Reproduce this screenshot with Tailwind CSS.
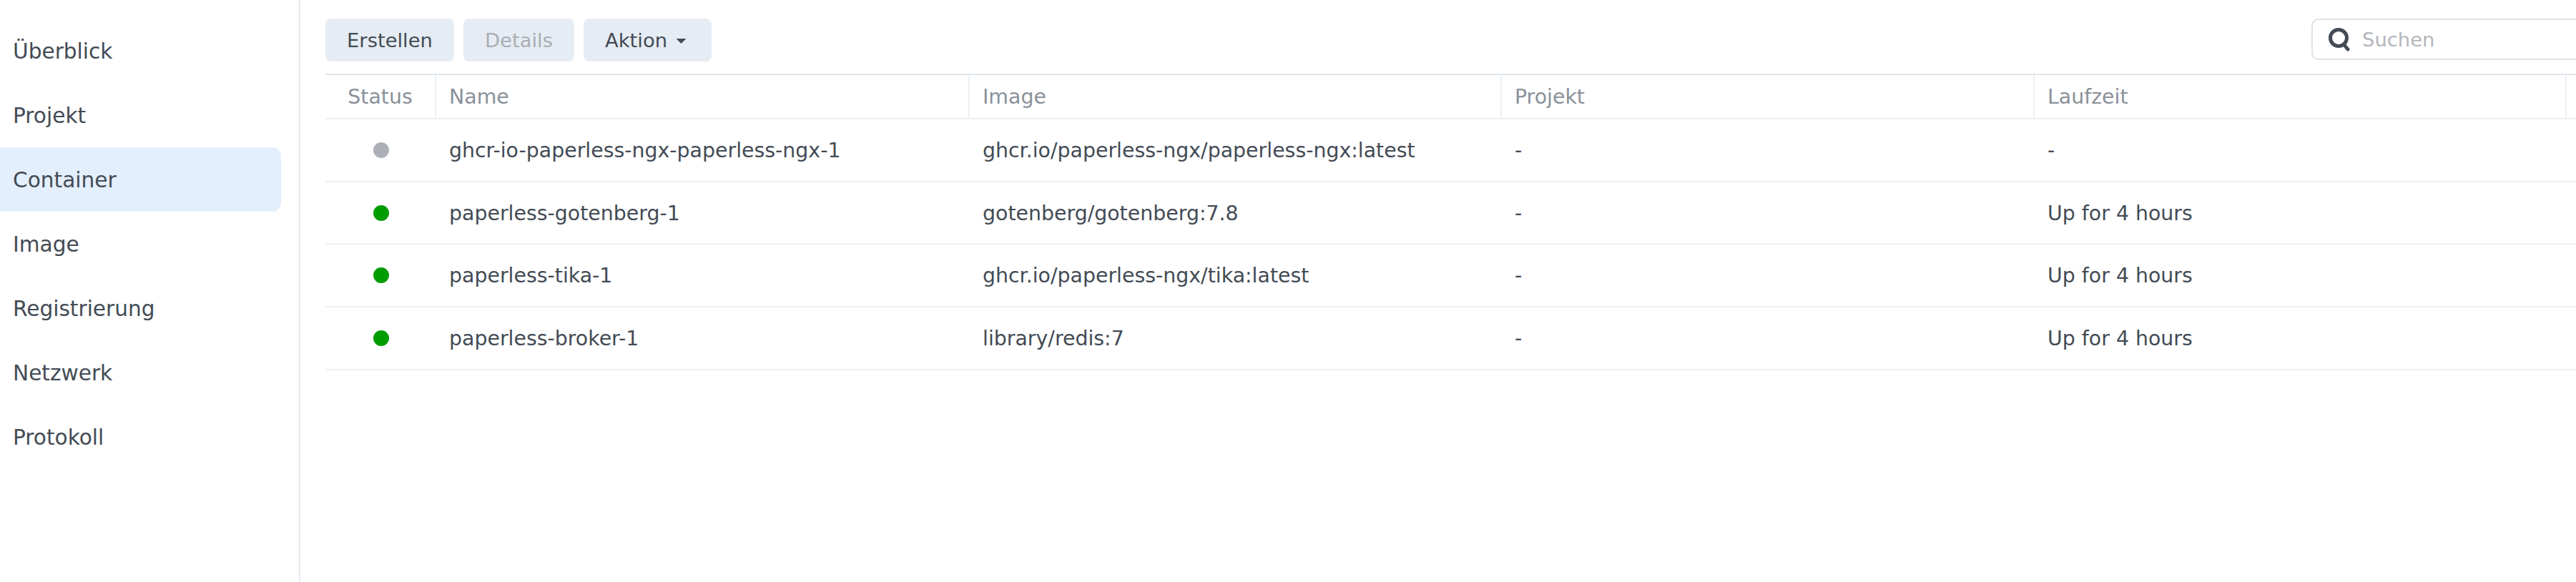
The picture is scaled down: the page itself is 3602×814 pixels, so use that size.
<!DOCTYPE html>
<html lang="de">
<head>
  <meta charset="UTF-8">
  <title>Container</title>
  <script src="https://cdn.jsdelivr.net/npm/@tailwindcss/browser@4"></script>
</head>
<body class="flex h-screen overflow-hidden bg-white text-[28.4px] text-[#434b55] font-['DejaVu_Sans',sans-serif]">

<!-- sidebar -->
<aside class="w-[420px] shrink-0 border-r-2 border-[#e6e9ed] pt-[26px] pr-[25px] text-[29.6px]">
  <div class="h-[90px] flex items-center pl-[18px] pt-[3px]">Überblick</div>
  <div class="h-[90px] flex items-center pl-[18px] pt-[3px]">Projekt</div>
  <div class="h-[90px] flex items-center pl-[18px] pt-[3px] bg-[#e3effc] rounded-r-[12px]">Container</div>
  <div class="h-[90px] flex items-center pl-[18px] pt-[3px]">Image</div>
  <div class="h-[90px] flex items-center pl-[18px] pt-[3px]">Registrierung</div>
  <div class="h-[90px] flex items-center pl-[18px] pt-[3px]">Netzwerk</div>
  <div class="h-[90px] flex items-center pl-[18px] pt-[3px]">Protokoll</div>
</aside>

<main class="flex-1 min-w-0 overflow-hidden pl-[35px] pt-[26px]">
  <!-- toolbar -->
  <div class="flex items-start h-[77px] text-[27.4px]">
    <button class="w-[180px] h-[60px] pt-[2px] rounded-[8px] bg-[#e6ecf3]">Erstellen</button>
    <button class="w-[155px] h-[60px] pt-[2px] ml-[13px] rounded-[8px] bg-[#e6ecf3] text-[#a9adb3]">Details</button>
    <button class="w-[179px] h-[60px] pt-[2px] ml-[13px] rounded-[8px] bg-[#e6ecf3] flex items-center pl-[30px] gap-[13px]">
      Aktion
      <svg class="w-[13px] h-[7px]" viewBox="0 0 13 7"><path d="M0.5 0h12a.5.5 0 0 1 .3.8L7 6.6a.7.7 0 0 1-1 0L.2.8A.5.5 0 0 1 .5 0z" fill="#434b55"/></svg>
    </button>
    <div class="ml-auto mr-[-100px] w-[470px] h-[58px] rounded-[10px] border-2 border-[#dde3e9] flex items-center pl-[21px] shrink-0">
      <svg class="w-[32px] h-[34px] shrink-0" viewBox="0 0 32 34" fill="none" stroke="#434b55" stroke-width="5" stroke-linecap="round">
        <circle cx="15" cy="15" r="11.5"/>
        <path d="M23 25l5 6"/>
      </svg>
      <span class="ml-[16px] pt-[2px] text-[#b3b6bb]">Suchen</span>
    </div>
  </div>

  <!-- table -->
  <div class="border-t-2 border-[#dde3e9]">
    <div class="grid grid-cols-[155px_746px_744px_745px_744px_1fr] h-[62px] border-b-2 border-[#eceff3] text-[#8a9199]">
      <div class="flex items-center justify-center pt-[3px] border-r-2 border-[#eceff3]">Status</div>
      <div class="flex items-center pl-[18px] pt-[3px] border-r-2 border-[#eceff3]">Name</div>
      <div class="flex items-center pl-[18px] pt-[3px] border-r-2 border-[#eceff3]">Image</div>
      <div class="flex items-center pl-[18px] pt-[3px] border-r-2 border-[#eceff3]">Projekt</div>
      <div class="flex items-center pl-[18px] pt-[3px] border-r-2 border-[#eceff3]">Laufzeit</div>
      <div></div>
    </div>

    <div class="grid grid-cols-[155px_746px_744px_745px_744px_1fr] h-[88px] border-b-2 border-[#eceff3] items-center">
      <div class="flex justify-center"><span class="w-[22px] h-[22px] rounded-full bg-[#aeb0b8]"></span></div>
      <div class="pl-[18px] pt-[3px]">ghcr-io-paperless-ngx-paperless-ngx-1</div>
      <div class="pl-[18px] pt-[3px]">ghcr.io/paperless-ngx/paperless-ngx:latest</div>
      <div class="pl-[18px] pt-[3px]">-</div>
      <div class="pl-[18px] pt-[3px]">-</div>
      <div></div>
    </div>
    <div class="grid grid-cols-[155px_746px_744px_745px_744px_1fr] h-[87px] border-b-2 border-[#eceff3] items-center">
      <div class="flex justify-center"><span class="w-[22px] h-[22px] rounded-full bg-[#009c00]"></span></div>
      <div class="pl-[18px] pt-[3px]">paperless-gotenberg-1</div>
      <div class="pl-[18px] pt-[3px]">gotenberg/gotenberg:7.8</div>
      <div class="pl-[18px] pt-[3px]">-</div>
      <div class="pl-[18px] pt-[3px]">Up for 4 hours</div>
      <div></div>
    </div>
    <div class="grid grid-cols-[155px_746px_744px_745px_744px_1fr] h-[88px] border-b-2 border-[#eceff3] items-center">
      <div class="flex justify-center"><span class="w-[22px] h-[22px] rounded-full bg-[#009c00]"></span></div>
      <div class="pl-[18px] pt-[3px]">paperless-tika-1</div>
      <div class="pl-[18px] pt-[3px]">ghcr.io/paperless-ngx/tika:latest</div>
      <div class="pl-[18px] pt-[3px]">-</div>
      <div class="pl-[18px] pt-[3px]">Up for 4 hours</div>
      <div></div>
    </div>
    <div class="grid grid-cols-[155px_746px_744px_745px_744px_1fr] h-[88px] border-b-2 border-[#eceff3] items-center">
      <div class="flex justify-center"><span class="w-[22px] h-[22px] rounded-full bg-[#009c00]"></span></div>
      <div class="pl-[18px] pt-[3px]">paperless-broker-1</div>
      <div class="pl-[18px] pt-[3px]">library/redis:7</div>
      <div class="pl-[18px] pt-[3px]">-</div>
      <div class="pl-[18px] pt-[3px]">Up for 4 hours</div>
      <div></div>
    </div>
  </div>
</main>
</body>
</html>
